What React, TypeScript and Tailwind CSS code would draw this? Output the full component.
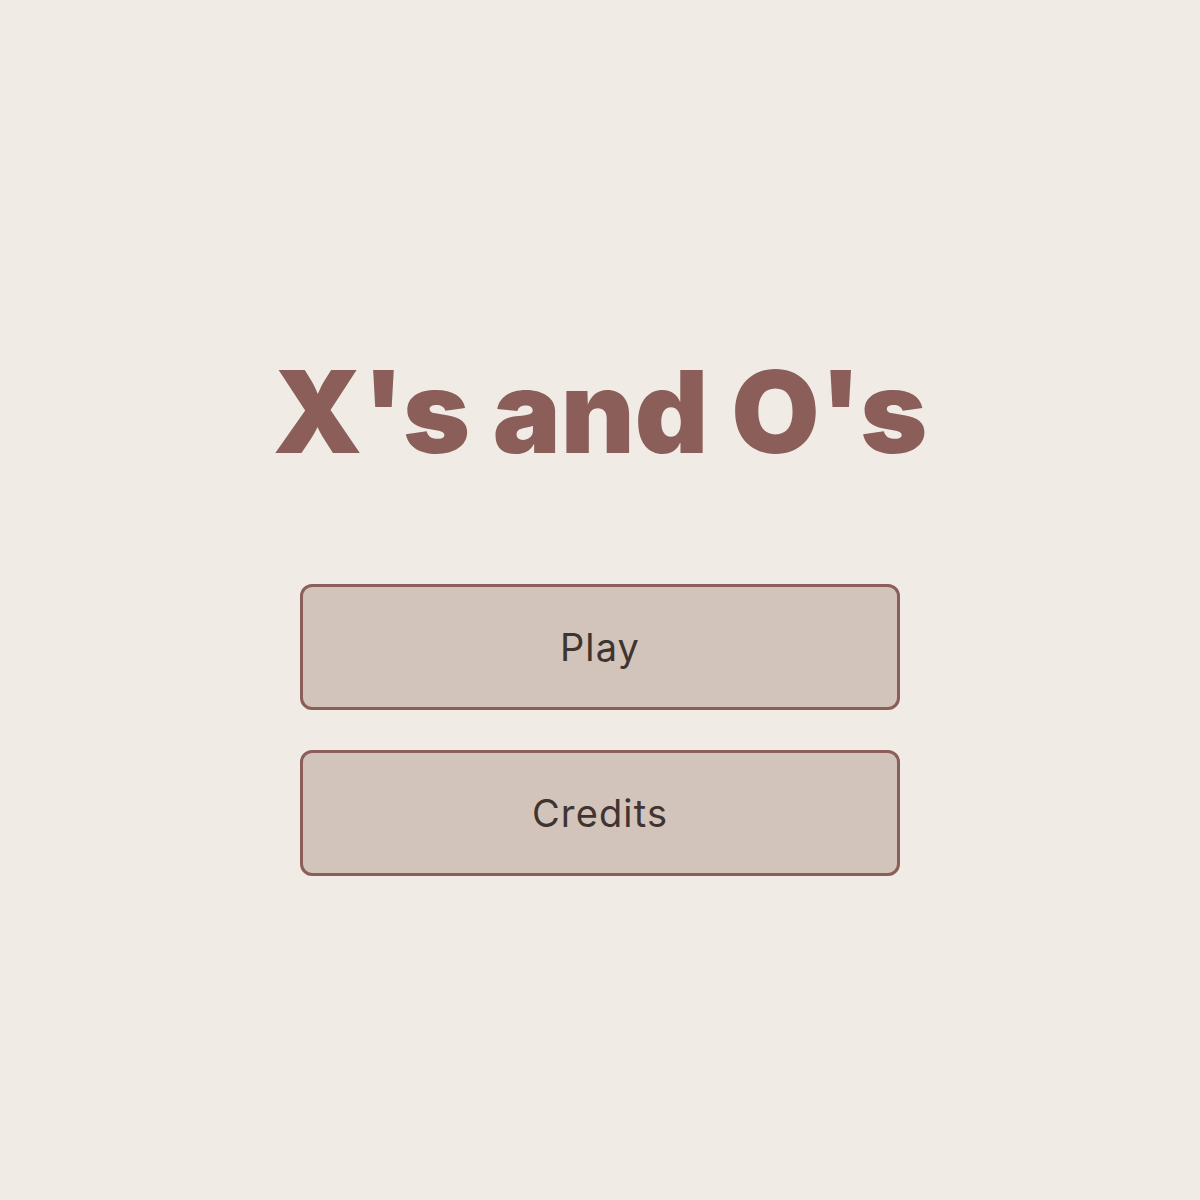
export default function App() {
  const buttons = ["Play", "Credits"];
  return (
    <div
      className="min-h-screen w-full bg-[#f0ebe5] flex flex-col items-center"
      style={{ fontFamily: "Inter, 'Noto Sans', sans-serif" }}
    >
      <h1 className="mt-[350px] text-[114px] leading-[124px] font-black text-[#8b5e5a] tracking-[0em] font-['Inter',sans-serif]">
        X's and O's
      </h1>
      <div className="mt-[110px] flex flex-col gap-[40px]">
        {buttons.map((label) => (
          <button
            key={label}
            className="w-[600px] h-[126px] rounded-[12px] border-[3px] border-[#8b5e5a] bg-[#d3c4bb] text-[38px] text-[#3f3530] font-['Inter',sans-serif] tracking-[0.03em] flex items-center justify-center"
          >
            {label}
          </button>
        ))}
      </div>
    </div>
  );
}
